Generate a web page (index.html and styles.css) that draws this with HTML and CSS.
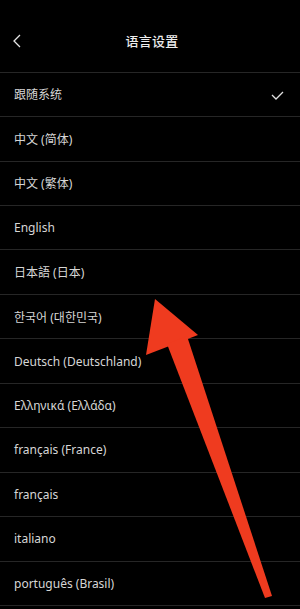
FILE: index.html
```html
<!DOCTYPE html>
<html lang="zh-CN">
<head>
    <meta charset="UTF-8">
    <meta name="viewport" content="width=device-width, initial-scale=1.0">
    <title>语言设置</title>
    <link rel="stylesheet" href="styles.css">
</head>
<body>
    <div class="screen">
        <div class="topbar">
            <svg class="back" width="10" height="16" viewBox="0 0 10 16">
                <path d="M8 2 L2 8 L8 14" fill="none" stroke="#e6e6e6" stroke-width="1.3"/>
            </svg>
            <h1 class="title">语言设置</h1>
        </div>

        <ul class="lang-list">
            <li class="lang-item">
                <span>跟随系统</span>
                <svg class="check" width="14" height="10" viewBox="0 0 14 10">
                    <path d="M1 4 L5 8 L12 1" fill="none" stroke="#e0e0e0" stroke-width="1.3"/>
                </svg>
            </li>
            <li class="lang-item"><span>中文 (简体)</span></li>
            <li class="lang-item"><span>中文 (繁体)</span></li>
            <li class="lang-item"><span>English</span></li>
            <li class="lang-item"><span>日本語 (日本)</span></li>
            <li class="lang-item"><span>한국어 (대한민국)</span></li>
            <li class="lang-item"><span>Deutsch (Deutschland)</span></li>
            <li class="lang-item"><span>Ελληνικά (Ελλάδα)</span></li>
            <li class="lang-item"><span>français (France)</span></li>
            <li class="lang-item"><span>français</span></li>
            <li class="lang-item"><span>italiano</span></li>
            <li class="lang-item"><span>português (Brasil)</span></li>
        </ul>

        <!-- red arrow drawn over the list -->
        <svg class="arrow" width="300" height="609" viewBox="0 0 300 609">
            <polygon points="155,299 146,355 198,335" fill="#ef3b1f"/>
            <polygon points="167,344 187,336 272,596 265,598" fill="#ef3b1f"/>
        </svg>
    </div>
</body>
</html>
```

FILE: styles.css
```css
body {
    margin: 0;
    background-color: #000;
    font-family: "Noto Sans", "Noto Sans CJK SC", sans-serif;
    color: #d6d6d6;
}
.screen {
    position: relative;
    width: 300px;
    height: 609px;
    overflow: hidden;
}
.topbar {
    height: 72.7px;
    box-sizing: border-box;
    border-bottom: 1px solid #262626;
    display: flex;
    align-items: center;
    position: relative;
    padding-left: 12px;
}
.back {
    display: block;
    margin-top: 10px;
}
.title {
    position: absolute;
    left: 0;
    right: 0;
    top: 31px;
    margin: 0;
    text-align: center;
    padding-left: 4px;
    font-size: 13px;
    font-weight: 500;
    color: #ededed;
    letter-spacing: 0.2px;
}
.lang-list {
    list-style: none;
    margin: 0;
    padding: 0;
}
.lang-item {
    height: 44.45px;
    box-sizing: border-box;
    border-bottom: 1px solid #262626;
    display: flex;
    align-items: center;
    justify-content: space-between;
    padding: 0 15px 0 14px;
    font-size: 12px;
}
.check {
    display: block;
    margin-top: 3px;
}
.arrow {
    position: absolute;
    left: 0;
    top: 0;
}
```
